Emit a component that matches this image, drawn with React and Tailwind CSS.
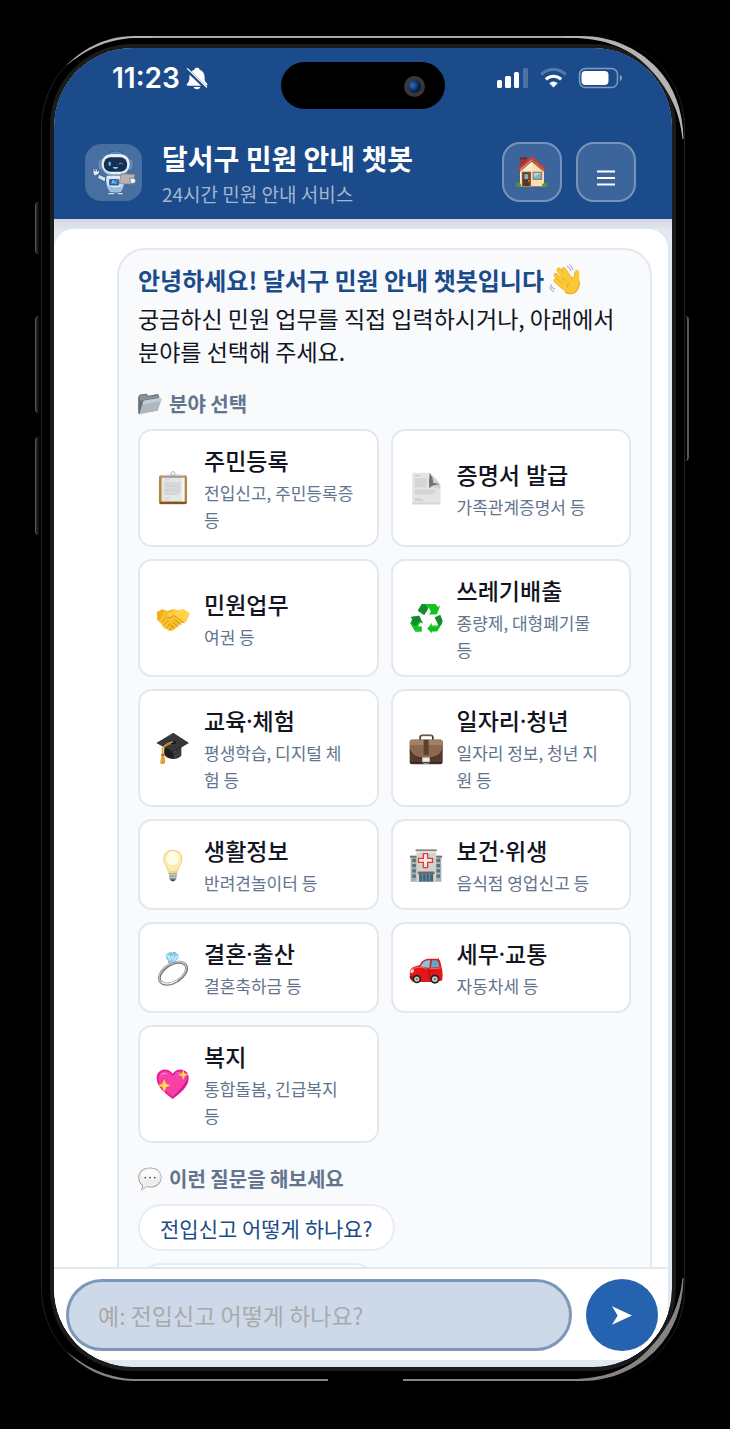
import React, { useState } from 'react';

const Clipboard = () => (
  <>
    <rect x="9" y="13" width="86" height="89" rx="7" fill="#b8873f" />
    <rect x="11" y="94" width="82" height="7" rx="3" fill="#7d5724" />
    <path d="M17 19h70v74H17z" fill="#e6e6e8" />
    <path d="M79 19h8v74h-8z" fill="#f6f6f7" />
    <path d="M27 27h14M25 82h18M27 86h10" stroke="#c5c5c8" strokeWidth="2" />
    <path d="M25 36h52M25 40h52M25 44h48M25 48h52M25 52h50M25 56h52M25 60h47M25 64h52M25 68h50M25 72h40" stroke="#cbcbce" strokeWidth="2.4" />
    <path d="M17 17c0-6 12-5 21-6h28c9 1 21 0 21 6z" fill="#c9cdd2" />
    <path d="M17 17h70v3H17z" fill="#83888f" />
    <circle cx="52" cy="8" r="6" fill="none" stroke="#a7acb3" strokeWidth="3" />
  </>
);

const Document = () => (
  <>
    <path d="M10 5h54c4 18 14 32 32 38v59H10z" fill="#e4e4e5" />
    <path d="M10 96h86v6H10z" fill="#d6d6d7" />
    <path d="M18 14h16M18 85h18M18 89h26" stroke="#b5b5b7" strokeWidth="2" />
    <path d="M18 24h38M18 28h38M18 32h36M18 36h38M18 40h38M18 44h34M18 48h38M18 58h64M18 62h60M18 66h64M18 70h55" stroke="#cacacc" strokeWidth="2.4" />
    <path d="M64 5c-3 14-3 32-2 48 8-10 20-13 34-10C84 36 74 24 64 5z" fill="#6f7072" />
    <path d="M62 5c12 8 27 25 34 38-8-5-15-7-22-6 0-13-4-25-12-32z" fill="#cfcfd0" />
    <path d="M62 53c8-10 20-13 34-10v14c-11-8-22-9-34-4z" fill="#c2c2c4" opacity=".6" />
  </>
);

const Handshake = () => (
  <>
    <path d="M3 34l17-9c11 5 18 6 25 2 10-3 15-1 19 1 8 0 14 0 20-3l19 14-12 25-13 4-20 17c-8 9-18 9-26 1-9-2-12-9-17-17L4 58z" fill="#f9c22b" />
    <path d="M3 34l17-9 7 3-14 30-9 0z" fill="#f2ae1c" />
    <path d="M84 25l19 14-12 25-9-1-12-33z" fill="#ffd34b" />
    <path d="M27 45c7-8 16-18 25-17 11 0 17 2 26 5l9 25c-8 7-13 6-21-1L54 45c-8 5-16 9-21 7-5-1-8-4-6-7z" fill="#ffd046" />
    <path d="M28 47c6 7 16 5 27-3l31 23M59 59l18 13M52 65l15 13M46 73l10 10" fill="none" stroke="#c88412" strokeWidth="2.6" strokeLinecap="round" />
    <path d="M20 62l8-7M26 72l10-11M34 81l9-12M43 87l7-11" stroke="#d18f14" strokeWidth="3" strokeLinecap="round" />
    <path d="M28 46c8-11 16-17 26-16" fill="none" stroke="#d8940f" strokeWidth="2" />
  </>
);

const Recycle = () => (
  <>
    <path d="M27 29L39 9h42l7 9 7-3-10 26H61l6-8-7-14-16 24z" fill="#11c51c" />
    <path d="M27 30L39 10c5-2 10-1 14 5l6 9-12 19z" fill="#168a31" />
    <path d="M5 49l26-4 12 24-8-4-8 13 12 1v14H19L4 67l8-14z" fill="#12bd1d" />
    <path d="M12 54l-8 15 16 24h18V78H23l8-15z" fill="#16c921" />
    <path d="M5 49l26-4 10 23-10-5-10 14C8 72 6 68 10 56z" fill="#168a31" />
    <path d="M80 49l16-6 6 16c1 8-3 14-7 20l-9 14H70v6L56 85l14-18v8h19z" fill="#10bd1c" />
    <path d="M78 51l17-8 7 17c0 9-4 14-9 16z" fill="#168a31" />
    <path d="M57 84l12-15v9h17" fill="none" stroke="#45dc49" strokeWidth="2" />
  </>
);

const GradCap = () => (
  <>
    <path d="M25 44v28c8 14 34 20 52 4V46L54 66z" fill="#1d1e20" />
    <path d="M54 66l23-16v26c-6 6-14 9-23 9z" fill="#3a3b3e" />
    <path d="M2 37L53 6l47 31-48 29z" fill="#292a2d" />
    <path d="M2 37L53 6l47 31-48 23z" fill="#37383c" />
    <ellipse cx="52" cy="35" rx="9" ry="5" fill="#151618" />
    <path d="M51 33C38 36 28 42 20 51c-1 7 1 17 1 29" fill="none" stroke="#e29b26" strokeWidth="4" strokeLinecap="round" />
    <path d="M46 38c-10 4-18 9-24 18v20" fill="none" stroke="#f0b445" strokeWidth="2.4" />
    <path d="M17 70h8l3 27c-4 5-11 5-15 1z" fill="#e08f1e" />
    <path d="M16 70h10v5H16z" fill="#ad6510" />
    <path d="M18 77l-2 20M22 77v21" stroke="#f6bd51" strokeWidth="2" />
  </>
);

const Briefcase = () => (
  <>
    <path d="M34 29v-9c0-5 3-7 8-7h23c5 0 8 2 8 7v9" fill="none" stroke="#4b3527" strokeWidth="5" />
    <path d="M37 15h33" stroke="#a98a6f" strokeWidth="2" />
    <rect x="2" y="27" width="101" height="75" rx="7" fill="#523a2d" />
    <path d="M3 33c0-4 3-6 7-6h85c4 0 7 2 7 6v25c-8 20-27 25-50 25S10 78 3 58z" fill="#8b6850" />
    <path d="M3 33c0-4 3-6 7-6h85c4 0 7 2 7 6v10H3z" fill="#a2806a" />
    <path d="M3 58c7 20 26 25 49 25s42-5 50-25" fill="none" stroke="#35231a" strokeWidth="2.5" />
    <path d="M45 27h15v46H45z" fill="#5d4130" />
    <path d="M40 80h24v14c0 4-3 6-7 6H47c-4 0-7-2-7-6z" fill="#cfcfcc" />
    <path d="M44 84h16v7H44z" fill="#f5f5f2" />
    <path d="M3 97h98" stroke="#302018" strokeWidth="3" />
  </>
);

const Bulb = () => (
  <>
    <path d="M39 75h25l-2 20c-4 8-17 8-21 0z" fill="#8f9092" />
    <path d="M39 80h24v4H39zM40 88h22v3H40z" fill="#d7d7d8" />
    <path d="M44 96h15c-3 8-12 8-15 0z" fill="#434447" />
    <path d="M51 5c19 0 30 12 30 29 0 15-12 22-14 41-6 4-25 4-31 0-2-19-14-26-14-41C22 17 33 5 51 5z" fill="#f1d983" />
    <path d="M51 9c16 0 26 11 26 25 0 13-10 19-14 36H40C36 53 26 47 26 34 26 20 35 9 51 9z" fill="#fbefb9" />
    <ellipse cx="51" cy="32" rx="18" ry="21" fill="#fffce9" />
    <path d="M46 73V52M57 73V52" stroke="#f1dc94" strokeWidth="2" />
  </>
);

const Hospital = () => (
  <>
    <path d="M3 24h26v79H5V30H3zM75 24h26v6h-2v73H75z" fill="#aeb0ae" />
    <path d="M3 24h26v5H3zM75 24h26v5H75z" fill="#6f706f" />
    <path d="M23 7h60v96H23z" fill="#d4d2cd" />
    <path d="M20 4h65v6H20z" fill="#8b8986" />
    <path d="M23 10h60v6H23z" fill="#e5e3df" />
    <path d="M10 33h11v10H10zM10 49h11v10H10zM10 65h11v10H10zM10 81h11v10H10zM84 33h11v10H84zM84 49h11v10H84zM84 65h11v10H84zM84 81h11v10H84z" fill="#4e7486" />
    <path d="M44 17h13v15h15v12H57v16H44V44H29V32h15z" fill="#f6e9e6" stroke="#dd3b40" strokeWidth="4" />
    <path d="M27 72h51v8H27z" fill="#6b6a69" />
    <path d="M31 80h43v23H31z" fill="#40637c" />
    <path d="M41 80v23M52 80v23M63 80v23" stroke="#93b0bf" strokeWidth="2" />
  </>
);

const Ring = () => (
  <>
    <g transform="rotate(-32 52 68)">
      <ellipse cx="52" cy="68" rx="46" ry="27" fill="none" stroke="#74777c" strokeWidth="9" />
      <ellipse cx="52" cy="66" rx="46" ry="27" fill="none" stroke="#c3c6ca" strokeWidth="4" />
      <path d="M7 72c4 14 22 22 43 22" fill="none" stroke="#f3f4f5" strokeWidth="3" />
    </g>
    <path d="M36 28l22-2 5 9-24 4z" fill="#9a9da2" />
    <path d="M30 11l11-7 18-1 10 9-1 12-13 11-12 1-12-12z" fill="#8dd0ee" />
    <path d="M30 11l14 4 10-1 15-2-8 15-10 5-10-5z" fill="#c6ecfa" />
    <path d="M41 4l4 11 14-12-4 14 13-5M44 15l6 18 7-17" fill="none" stroke="#5eaed6" strokeWidth="1.6" />
  </>
);

const Car = () => (
  <>
    <path d="M90 30V21" stroke="#444" strokeWidth="2" />
    <path d="M3 75c-3-15 2-24 18-28l12-4c6-12 13-19 31-19h21c6 0 9 3 11 10l5 22c2 9 3 25 0 34L80 95H14C6 92 3 85 3 75z" fill="#e3161c" />
    <path d="M37 44c5-10 11-16 25-16h3l-3 24-29-5z" fill="#7fc5dd" />
    <path d="M70 28h12c5 0 7 3 9 9l2 12-26 2z" fill="#5da8c6" />
    <path d="M8 55c12-5 30-8 46-1M62 55l35-3" fill="none" stroke="#ff6a62" strokeWidth="3" />
    <path d="M62 55v30M64 61h8" stroke="#8f0b10" strokeWidth="2" />
    <path d="M5 58l9-3 1 10-11 3z" fill="#fbe6c3" />
    <path d="M1 77h12v9H4z" fill="#9c0f13" />
    <circle cx="24" cy="86" r="13" fill="#1f1f22" />
    <circle cx="24" cy="86" r="8" fill="#c3c5c9" />
    <circle cx="24" cy="86" r="3" fill="#55585c" />
    <circle cx="79" cy="86" r="14" fill="#1f1f22" />
    <circle cx="79" cy="86" r="9" fill="#c3c5c9" />
    <circle cx="79" cy="86" r="3" fill="#55585c" />
  </>
);

const Heart = () => (
  <>
    <path d="M51 98C27 79 3 61 2 35 1 19 13 8 27 8c11 0 19 5 24 13C56 13 64 8 75 8c14 0 26 11 25 27-1 26-25 44-49 63z" fill="#e81e96" />
    <path d="M51 90C30 74 8 57 8 36c0-14 9-23 20-23 12 0 18 7 23 16 5-9 12-16 23-16 12 0 20 9 20 22 0 22-22 39-43 55z" fill="#f640aa" />
    <path d="M13 28c3-9 13-13 22-8-9-1-17 2-22 8zM60 20c5-5 11-6 17-4-6 0-12 1-17 4z" fill="#ffa5dd" />
    <path d="M97 32c-2 24-25 44-46 62 5-10 36-31 46-62z" fill="#c80d80" />
    <path d="M25 37l6 14 14 5-14 6-6 15-6-15-15-6 15-5z" fill="#ffcf3f" />
    <path d="M25 43l3 11 11 2-11 3-3 12z" fill="#ffe98a" />
    <path d="M84 8l3 11 12 4-11 5-5 12-4-12-12-5 12-4z" fill="#ffcf3f" />
    <path d="M84 14l2 8 8 1-9 3-2 8z" fill="#ffe98a" />
  </>
);

const House = () => (
  <>
    <path d="M15 8l19-6v34H15z" fill="#a5322b" />
    <path d="M13 5h22v6H13z" fill="#7e241f" />
    <path d="M52 8l39 36v54H13V42z" fill="#f6e1b5" />
    <path d="M13 42l39-33v89H13z" fill="#fbebca" />
    <path d="M52 1l46 41-5 5-42-36L9 47l-6-5z" fill="#cf3a33" />
    <path d="M52 12l39 34-2 5-38-32-38 32-2-4z" fill="#7a2b22" opacity=".7" />
    <rect x="19" y="51" width="30" height="47" fill="#8a5230" />
    <rect x="24" y="56" width="19" height="42" fill="#5e331c" />
    <rect x="27" y="59" width="13" height="16" fill="#79b6d4" />
    <circle cx="41" cy="81" r="2" fill="#efca5a" />
    <rect x="54" y="51" width="31" height="27" fill="#a97e50" />
    <rect x="58" y="55" width="23" height="19" fill="#6eb6df" />
    <path d="M58 55h23L58 69z" fill="#a6d8ef" />
    <path d="M0 92c1-9 9-10 12-4 5 2 5 8 3 12H3c-3-2-4-5-3-8zM86 100c-3-6 1-12 6-11 5-4 11 1 11 7 0 3-2 4-3 4z" fill="#4f9435" />
    <path d="M10 98h83v3H10z" fill="#a48a60" />
  </>
);

const Wave = () => (
  <>
    <g stroke="#e5a01a" strokeWidth="15" strokeLinecap="round">
      <path d="M48 78L20 54M54 66L20 35M62 56L30 17M72 50L47 16" />
    </g>
    <g stroke="#fcc935" strokeWidth="12" strokeLinecap="round">
      <path d="M48 78L20 54M54 66L20 35M62 56L30 17M72 50L47 16" />
    </g>
    <path d="M38 68l38-26c5 3 8 2 9-4l1-14c1-8 13-9 15-1 1 9-1 16 1 25 3 17 1 30-9 41-12 13-31 14-43 2z" fill="#fcc935" />
    <path d="M73 44c5 2 10 0 12-5l1-14" fill="none" stroke="#dc951a" strokeWidth="2.5" />
    <path d="M52 93c14 11 33 8 42-6 6-9 9-18 8-31" fill="none" stroke="#efa51c" strokeWidth="4" />
    <path d="M66 62c-5 4-8 10-6 17" fill="none" stroke="#dc951a" strokeWidth="2.5" strokeLinecap="round" />
    <path d="M60 5c6 3 10 7 12 14M68 0c6 4 10 9 11 15M3 69c2 8 6 12 13 15M0 78c2 7 6 11 12 14" fill="none" stroke="#6c6c6c" strokeWidth="2.500" strokeLinecap="round" />
  </>
);

const Folder = () => (
  <>
    <path d="M3 18l5-7 30-3 6 8 42-7 6 9-6 62-83 14z" fill="#66737d" />
    <path d="M8 16l30-4 6 9 43-6v10L6 38z" fill="#87949d" />
    <path d="M5 96l17-52c1-4 3-6 8-7l67-11c4-1 6 1 5 5L88 75c-1 4-3 5-7 6z" fill="#aeb8bf" />
    <path d="M22 44c1-4 3-6 8-7l67-11c4-1 6 1 5 5l-2 7-79 16z" fill="#c6ced3" />
    <path d="M3 20v73l3 2" stroke="#48545d" strokeWidth="3" fill="none" />
  </>
);

const Speech = () => (
  <>
    <path d="M52 2c29 0 50 18 50 43 0 26-21 44-50 44-6 0-12-1-17-2-6 7-14 13-24 14 5-6 8-13 6-22C6 71 1 60 1 45 1 20 23 2 52 2z" fill="#9d9fa2" />
    <path d="M52 5c27 0 47 16 47 39S79 85 52 85c-6 0-12-1-18-2-5 7-9 11-15 13 3-6 4-12 2-19C10 69 5 59 5 45 5 22 25 5 52 5z" fill="#eeeeef" />
    <ellipse cx="52" cy="31" rx="37" ry="22" fill="#fbfbfb" />
    <circle cx="32" cy="46" r="4" fill="#4b4c4f" />
    <circle cx="52" cy="46" r="4" fill="#4b4c4f" />
    <circle cx="72" cy="46" r="4" fill="#4b4c4f" />
  </>
);

const Emoji = ({ children, className }) => (
  <svg viewBox="0 0 104 104" className={`shrink-0 overflow-visible ${className}`} aria-hidden="true">
    {children}
  </svg>
);

const Robot = () => (
  <svg viewBox="0 0 132 134" className="size-11" role="img" aria-label="챗봇">
    <path d="M51 6c10-8 31-8 41 0l3 7H48z" fill="#4f8cc0" stroke="#23456c" strokeWidth="2" />
    <ellipse cx="27" cy="42" rx="8" ry="16" fill="#668fb8" />
    <ellipse cx="115" cy="42" rx="7" ry="16" fill="#668fb8" />
    <path d="M20 70L8 76c-8-5-5-15-6-23 4-2 5 6 7 9 0-6-2-10 3-10 3 5 3 8 4 11 1-3 2-6 5-4 2 4 0 7-1 11z" fill="#e3eefa" stroke="#23456c" strokeWidth="2" />
    <path d="M19 71l23 10-4 13-22-11z" fill="#cfe2f4" stroke="#23456c" strokeWidth="2" />
    <path d="M43 74h53c4 18 2 39-11 53H55C42 113 39 91 43 74z" fill="#dceafa" stroke="#335c87" strokeWidth="2" />
    <path d="M44 103c15 11 37 11 50 0-2 10-5 18-10 24H56c-6-7-10-15-12-24z" fill="#9cbddc" />
    <path d="M48 127h20v6H45zM75 127h17l4 6H75z" fill="#eff6fc" stroke="#23456c" strokeWidth="2" />
    <rect x="27" y="8" width="88" height="64" rx="31" fill="#e8f1fa" stroke="#476d98" strokeWidth="2" />
    <path d="M31 50c7 16 24 21 41 21 18 0 33-5 39-21-4 22-20 25-40 25s-35-4-40-25z" fill="#92b4d5" />
    <rect x="35" y="19" width="71" height="44" rx="20" fill="#172f50" />
    <ellipse cx="53" cy="39" rx="4" ry="7" fill="#54b7f0" />
    <path d="M81 40c3-4 8-4 11 0" fill="none" stroke="#54b7f0" strokeWidth="3" strokeLinecap="round" />
    <path d="M62 49h17c-3 8-14 8-17 0z" fill="#78d0f6" />
    <rect x="51" y="85" width="30" height="20" rx="4" fill="#2662a2" />
    <text x="66" y="101" textAnchor="middle" className="fill-[#8ed6f6] font-['Inter'] text-[16px] font-bold">AI</text>
    <path d="M88 69l42 2-6 30-42-1z" fill="#b7b2ad" stroke="#76726f" strokeWidth="2" />
    <path d="M114 84c9-3 18-1 18 6s-6 11-15 8z" fill="#eff5fb" stroke="#476d98" strokeWidth="2" />
  </svg>
);

const StatusIcons = () => (
  <svg viewBox="0 0 126 22" className="h-[22px] w-[126px]" aria-hidden="true">
    <g fill="#fff">
      <rect x="0" y="13" width="5" height="8" rx="1.5" />
      <rect x="8" y="9" width="6" height="12" rx="1.5" />
      <rect x="17" y="5" width="5" height="16" rx="1.5" />
      <rect x="26" y="1" width="5" height="20" rx="1.5" opacity=".22" />
      <path d="M56.500 20.500l4.200-4.300a6 6 0 0 0-8.400 0z" />
    </g>
    <path d="M48.800 12.400a10.800 10.800 0 0 1 15.400 0" fill="none" stroke="#fff" strokeWidth="3" />
    <path d="M44.300 7.500a17.400 17.400 0 0 1 24.400 0" fill="none" stroke="#fff" strokeOpacity=".25" strokeWidth="3.200" />
    <rect x="82.500" y="1.500" width="38" height="19" rx="6" fill="none" stroke="#fff" strokeOpacity=".45" strokeWidth="1.500" />
    <rect x="84.500" y="4" width="27" height="14" rx="4" fill="#fff" />
    <path d="M123 8v6c2.500-1 2.500-5 0-6z" fill="#fff" opacity=".5" />
  </svg>
);

const BellOff = () => (
  <svg viewBox="0 0 66 70" className="h-[23px] w-[22px]" aria-hidden="true">
    <path d="M33 2c5 0 7 2 8 6 10 3 15 11 15 22 0 12 2 15 8 21 2 4 0 6-4 6H6c-4 0-6-3-3-6 6-6 7-10 7-21C10 19 16 11 25 8c1-4 3-6 8-6zM23 61h20c-2 9-18 9-20 0z" fill="#fff" />
    <path d="M1 7l62 59" stroke="#1b4b8a" strokeWidth="11" />
    <path d="M4 5l58 56" stroke="#fff" strokeWidth="4" strokeLinecap="round" />
  </svg>
);

// brilho metálico da moldura do aparelho
const FrameShine = () => (
  <div className="pointer-events-none absolute inset-0">
    <div className="absolute top-0 right-[120px] left-[110px] h-0.5 bg-[#aaa7a8]" />
    <svg viewBox="0 0 110 110" className="absolute top-0 left-0 size-[110px]">
      <path d="M24 30C38 15 62 0 92 0h18v2H92C64 3 42 15 24 30z" fill="#b5b3b3" />
    </svg>
    <svg viewBox="0 0 120 110" className="absolute top-0 right-0 h-[110px] w-[120px] overflow-visible">
      <path d="M0 0h18C47 0 74 12 93 32c17 18 26 42 26.500 71h-1C116 76 105 52 83 30 64 11 38 2 8 2H0z" fill="#b5b3b3" />
    </svg>
    <div className="absolute bottom-0 left-[110px] h-0.5 w-[176px] bg-[#858585]" />
    <div className="absolute right-[120px] bottom-0 left-[361px] h-0.5 bg-[#858585]" />
    <svg viewBox="0 0 110 110" className="absolute bottom-0 left-0 size-[110px] -scale-y-100">
      <path d="M24 30C38 15 62 0 92 0h18v2H92C64 3 42 15 24 30z" fill="#858585" />
    </svg>
    <svg viewBox="0 0 120 110" className="absolute right-0 bottom-0 h-[110px] w-[120px] -scale-y-100 overflow-visible">
      <path d="M0 0h18C47 0 74 12 93 32c17 18 26 42 26.500 71h-1C116 76 105 52 83 30 64 11 38 2 8 2H0z" fill="#858585" />
    </svg>
  </div>
);

const sideKey = 'absolute w-[6px] rounded-l-sm border-l border-[#555] bg-gradient-to-r from-[#333] to-black';

const categories = [
  { title: '주민등록', desc: '전입신고, 주민등록증 등', Icon: Clipboard },
  { title: '증명서 발급', desc: '가족관계증명서 등', Icon: Document },
  { title: '민원업무', desc: '여권 등', Icon: Handshake },
  { title: '쓰레기배출', desc: '종량제, 대형폐기물 등', Icon: Recycle },
  { title: '교육·체험', desc: '평생학습, 디지털 체험 등', Icon: GradCap },
  { title: '일자리·청년', desc: '일자리 정보, 청년 지원 등', Icon: Briefcase },
  { title: '생활정보', desc: '반려견놀이터 등', Icon: Bulb },
  { title: '보건·위생', desc: '음식점 영업신고 등', Icon: Hospital },
  { title: '결혼·출산', desc: '결혼축하금 등', Icon: Ring },
  { title: '세무·교통', desc: '자동차세 등', Icon: Car },
  { title: '복지', desc: '통합돌봄, 긴급복지 등', Icon: Heart },
];

const questions = ['전입신고 어떻게 하나요?'];

const SectionLabel = ({ children, Icon }) => (
  <h3 className="mt-[21px] mb-[10px] flex items-center gap-[7px] text-[20px] leading-[30px] font-bold text-slate-500">
    <Emoji className="size-6"><Icon /></Emoji>
    {children}
  </h3>
);

const CategoryCard = ({ title, desc, Icon, onClick }) => (
  <button
    type="button"
    onClick={onClick}
    className="flex items-center gap-[14px] rounded-[14px] border-2 border-slate-200 bg-white py-3 pr-[22px] pl-4 text-left"
  >
    <Emoji className="size-[34px]"><Icon /></Emoji>
    <span className="min-w-0 flex-1">
      <span className="block font-['Noto_Sans','Noto_Sans_CJK_KR',sans-serif] text-[23px] leading-[36px] font-medium text-[#12141f]">{title}</span>
      <span className="block text-[17px] leading-[27px] text-slate-500">{desc}</span>
    </span>
  </button>
);

const App = () => {
  const [message, setMessage] = useState('');

  const handleSubmit = (e) => {
    e.preventDefault();
    setMessage('');
  };

  return (
    <div className="flex h-screen flex-col bg-black pt-9 pr-[45px] pb-12 pl-[41px] font-['Noto_Sans_CJK_KR',sans-serif]">
      <div className="relative flex min-h-0 flex-1 flex-col rounded-[92px] border-x border-[#222] bg-black px-2 pt-2 pb-[10px]">
        <div className={`${sideKey} top-[166px] -left-[7px] h-[52px]`} />
        <div className={`${sideKey} top-[280px] -left-[7px] h-[97px]`} />
        <div className={`${sideKey} top-[401px] -left-[7px] h-[98px]`} />
        <div className="absolute top-[280px] -right-[5px] h-[145px] w-1 rounded-r-sm border-r-2 border-[#555] bg-black" />
        <FrameShine />

        <div className="flex min-h-0 flex-1 flex-col overflow-hidden rounded-[82px] border-4 border-[#1b1b1b]">
          <div className="relative flex min-h-0 flex-1 flex-col overflow-hidden rounded-[78px] bg-[#e2e8f1]">
            {/* Barra de status + cabeçalho */}
            <header className="bg-[#1b4b8a]">
              <div className="flex h-[77px] items-start justify-between pt-[14px] pr-[49px] pl-[58px]">
                <div className="flex h-8 items-center gap-[6px] text-white">
                  <span className="font-['Inter'] text-[28px] leading-8 font-semibold">11:23</span>
                  <BellOff />
                </div>
                <div className="absolute top-[14px] left-1/2 h-[47px] w-[164px] -translate-x-1/2 rounded-full bg-black">
                  <div className="absolute top-[14px] right-5 flex size-[21px] items-center justify-center rounded-full bg-[#383839]">
                    <div className="size-[13px] rounded-full bg-[radial-gradient(circle_at_35%_40%,#2f6dc0,#0a2350_55%,#02060f)]" />
                  </div>
                </div>
                <div className="flex h-8 items-center">
                  <StatusIcons />
                </div>
              </div>

              <div className="flex items-start gap-5 pt-[17px] pr-9 pb-[5px] pl-[31px]">
                <div className="mt-0.5 flex size-[57px] items-center justify-center rounded-2xl bg-white/20">
                  <Robot />
                </div>
                <div className="min-w-0 flex-1">
                  <h1 className="text-[28px] leading-[32px] font-bold text-white">달서구 민원 안내 챗봇</h1>
                  <p className="text-[19px] leading-[40px] text-[#a4b7d0]">24시간 민원 안내 서비스</p>
                </div>
                <div className="flex gap-[14px]">
                  <button type="button" aria-label="홈" className="flex size-[60px] items-center justify-center rounded-[18px] border-2 border-white/30 bg-white/15">
                    <Emoji className="size-[32px]"><House /></Emoji>
                  </button>
                  <button type="button" aria-label="메뉴" className="flex size-[60px] items-center justify-center rounded-[18px] border-2 border-white/30 bg-white/15 pt-3">
                    <svg viewBox="0 0 18 16" className="h-4 w-[18px]" stroke="#fff" strokeWidth="2">
                      <path d="M0 1.500h18M0 8h18M0 14.500h18" />
                    </svg>
                  </button>
                </div>
              </div>
            </header>

            <div className="h-[10px] shrink-0 bg-gradient-to-b from-[#d3d8e1] to-[#e1e6ee]" />

            {/* Conversa */}
            <div className="mr-1 mb-[7px] flex min-h-0 flex-1 flex-col overflow-hidden rounded-t-[20px] bg-white">
              <main className="min-h-0 flex-1 overflow-y-auto pt-[19px] pr-4 pl-[63px] [scrollbar-width:none]">
                <div className="rounded-[28px] border-2 border-slate-200 bg-slate-50 px-[19px] pt-3 pb-5">
                  <h2 className="flex items-center gap-[6px] text-[24px] leading-[36px] font-bold text-[#1b4b8a]">
                    안녕하세요! 달서구 민원 안내 챗봇입니다
                    <Emoji className="size-[30px]"><Wave /></Emoji>
                  </h2>
                  <p className="mt-1 text-[23px] leading-[33px] text-[#12141f]">
                    궁금하신 민원 업무를 직접 입력하시거나, 아래에서 분야를 선택해 주세요.
                  </p>

                  <SectionLabel Icon={Folder}>분야 선택</SectionLabel>
                  <div className="grid grid-cols-2 gap-3">
                    {categories.map((item) => (
                      <CategoryCard key={item.title} {...item} onClick={() => setMessage(item.title)} />
                    ))}
                  </div>

                  <SectionLabel Icon={Speech}>이런 질문을 해보세요</SectionLabel>
                  <div className="flex flex-col items-start gap-3">
                    {questions.map((q) => (
                      <button
                        key={q}
                        type="button"
                        onClick={() => setMessage(q)}
                        className="h-[47px] rounded-full border-2 border-[#e5edf8] bg-white px-5 text-[21px] leading-[42px] text-[#1b4b8a]"
                      >
                        {q}
                      </button>
                    ))}
                    <div className="h-[47px] w-60 rounded-full border-2 border-[#e5edf8] bg-white" />
                  </div>
                </div>
              </main>

              <form onSubmit={handleSubmit} className="flex items-center gap-[14px] border-t-2 border-slate-200 bg-white pt-[10px] pr-[10px] pb-[9px] pl-3">
                <input
                  type="text"
                  aria-label="질문 입력"
                  value={message}
                  onChange={(e) => setMessage(e.target.value)}
                  placeholder="예: 전입신고 어떻게 하나요?"
                  className="h-[72px] min-w-0 flex-1 rounded-full border-[3px] border-[#7c97b9] bg-[#cdd9e9] px-[29px] text-[23px] text-[#12141f] outline-none placeholder:text-[#a9a9a9]"
                />
                <button type="submit" aria-label="보내기" className="flex size-[72px] shrink-0 items-center justify-center rounded-full bg-[#2562b0]">
                  <svg viewBox="0 0 60 56" className="h-[19px] w-5" fill="#fff">
                    <path d="M0 0l60 28L0 56l17-28z" />
                  </svg>
                </button>
              </form>
            </div>
          </div>
        </div>
      </div>
    </div>
  );
};

export default App;
